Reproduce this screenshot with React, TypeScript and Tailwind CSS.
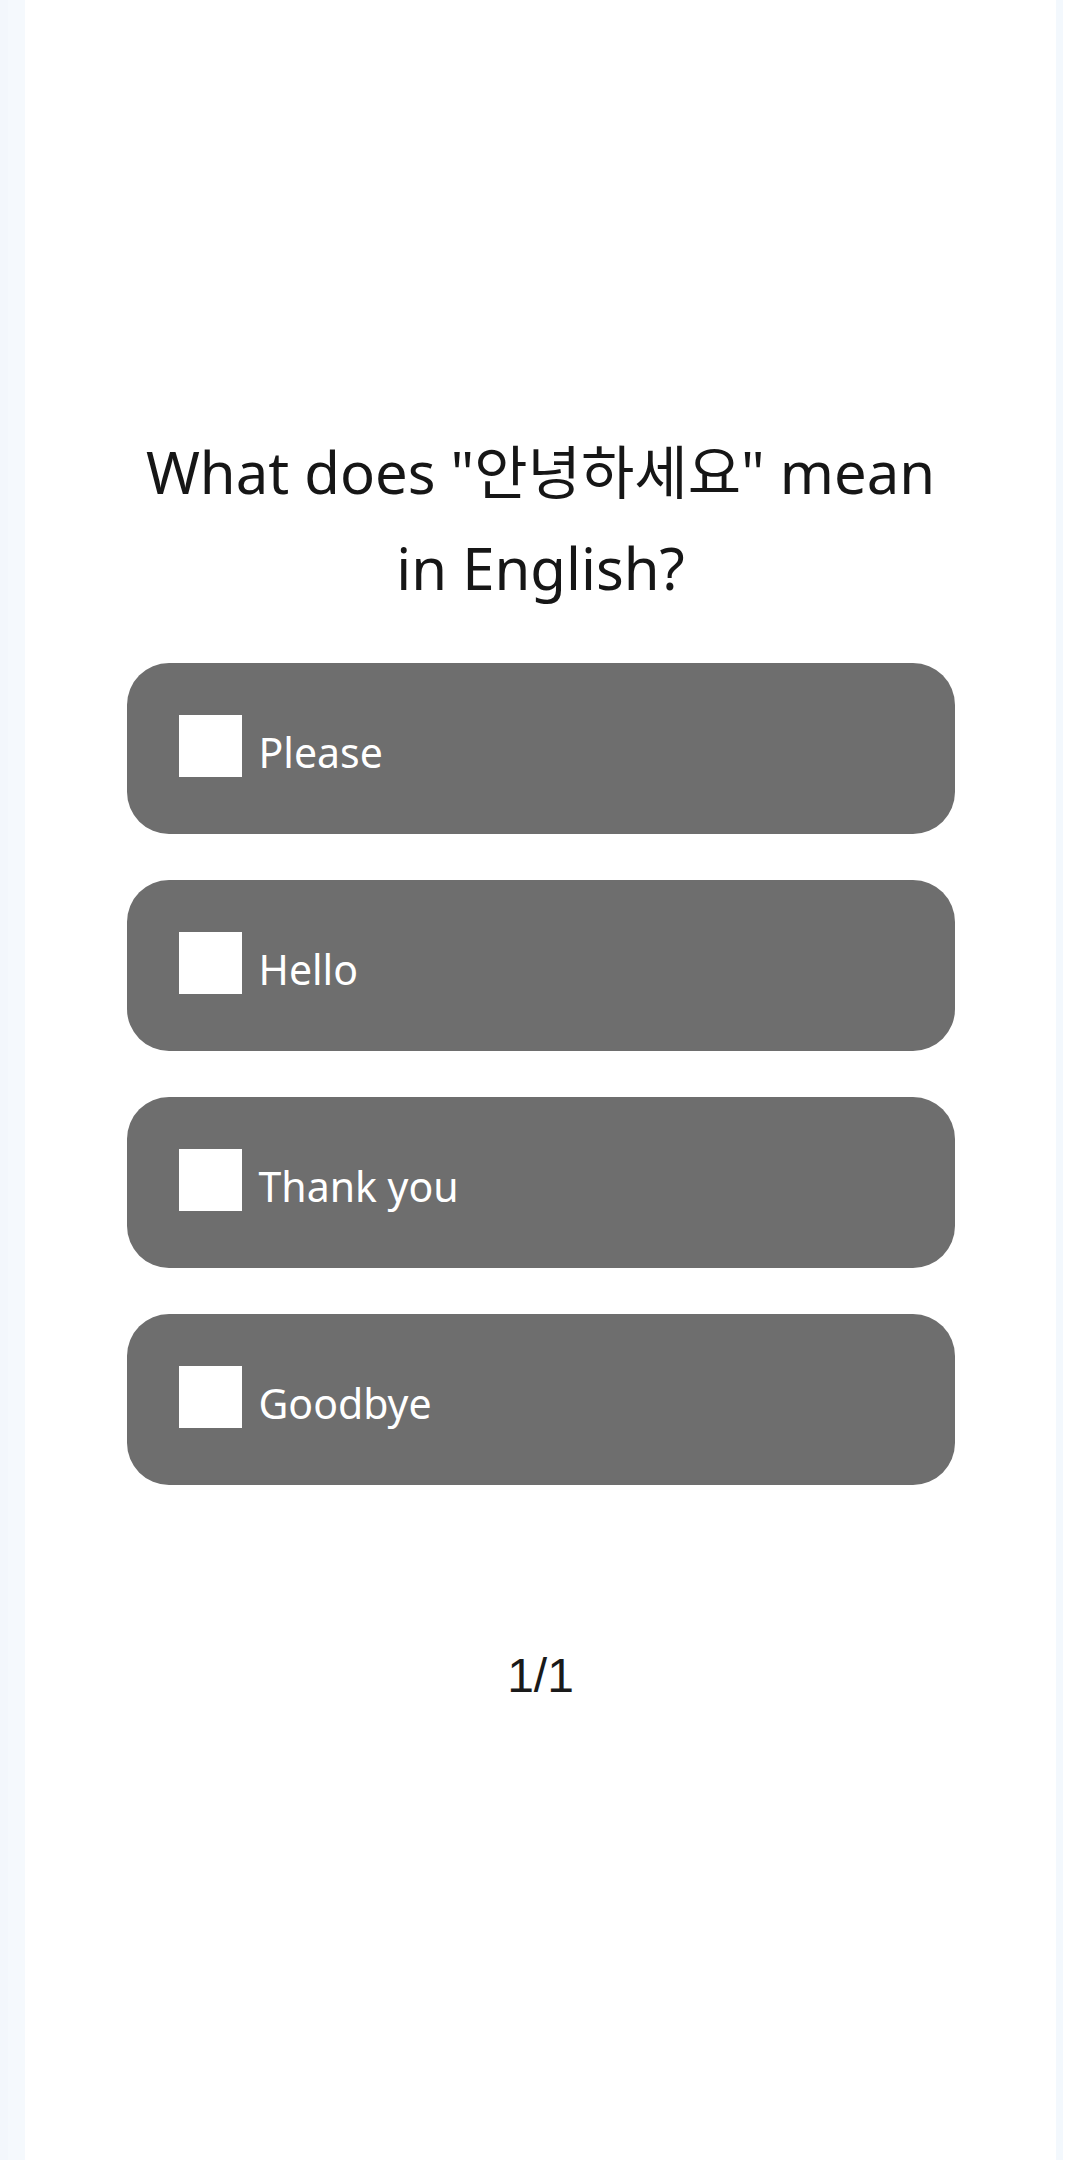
import { useState } from 'react';

const OPTIONS = ['Please', 'Hello', 'Thank you', 'Goodbye'];

export default function App() {
  const [picked, setPicked] = useState<number | null>(null);

  return (
    <div className="flex min-h-[2160px] w-[1080px] bg-white" style={{ fontFamily: '"Noto Sans", "Noto Sans CJK KR", sans-serif' }}>
      <div className="w-[8px] bg-[#f3f7fc]" />
      <div className="w-[17px] bg-[#f5f9fd]" />
      <main className="flex flex-1 flex-col items-center pt-[424px]">
        <h1 className="w-[828px] text-center text-[58px] leading-[96px] font-normal text-[#161616]">
          What does "안녕하세요" mean in English?
        </h1>

        <div className="mt-[47px] flex w-[828px] flex-col gap-[46px]">
          {OPTIONS.map((opt, i) => (
            <button
              key={opt}
              type="button"
              onClick={() => setPicked(i)}
              className="flex h-[171px] items-center gap-[17px] rounded-[42px] bg-[#6e6e6e] pl-[52px] text-left"
            >
              <span className={`mb-[5px] h-[62px] w-[63px] ${picked === i ? 'bg-[#dcdcdc]' : 'bg-white'}`} />
              <span className="pt-[8px] text-[41px] text-white">{opt}</span>
            </button>
          ))}
        </div>

        <div className="mt-[155px] text-[48px] leading-[72px] text-[#1a1a1a]" style={{ fontFamily: '"Liberation Sans", sans-serif' }}>
          1/1
        </div>
      </main>
      <div className="w-[7px] bg-[#f3f8fd]" />
      <div className="w-[17px] bg-white" />
    </div>
  );
}
